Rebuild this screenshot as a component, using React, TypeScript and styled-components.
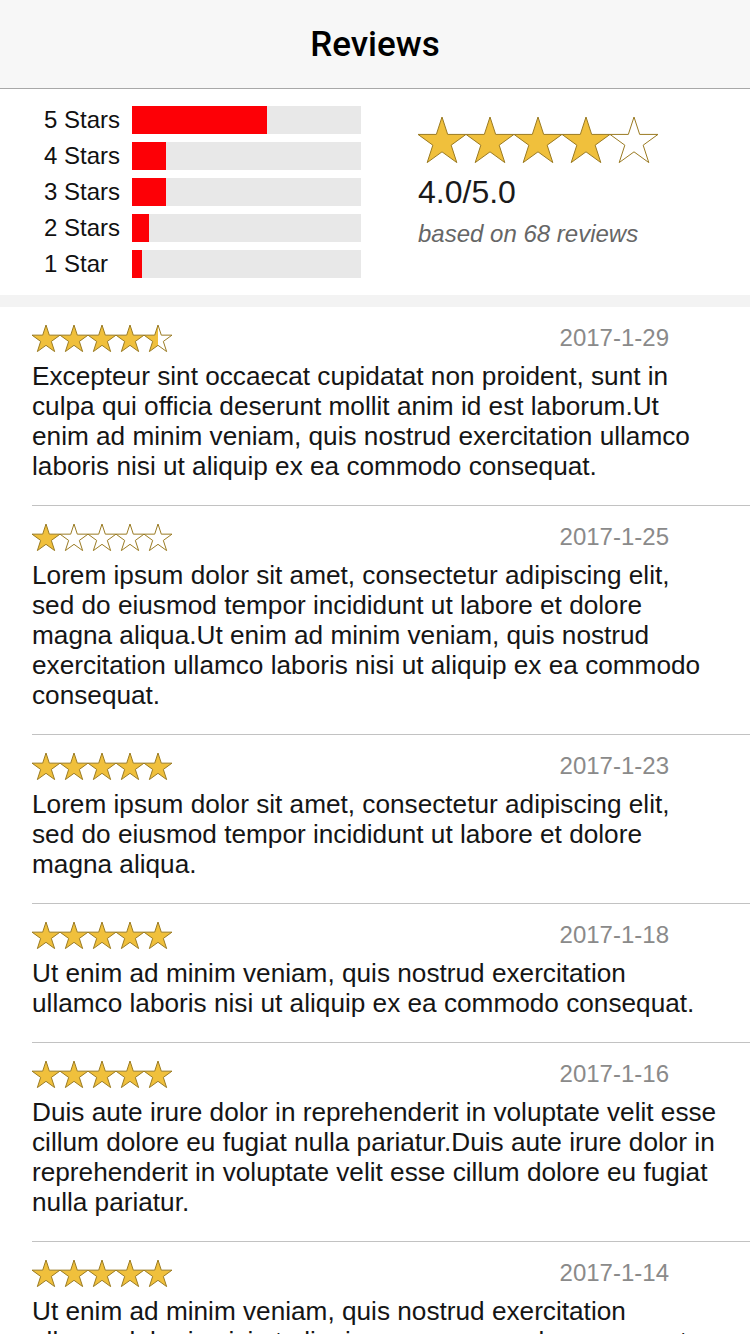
import React, { useId } from "react";
import styled, { createGlobalStyle } from "styled-components";

const GlobalStyle = createGlobalStyle`
  html, body { margin: 0; padding: 0; background: #ffffff; }
  body { font-family: "Liberation Sans", Arial, Helvetica, sans-serif; color: #111; }
  * { box-sizing: border-box; }
`;

const Page = styled.div`
  width: 750px;
  min-height: 1334px;
  background: #fff;
  overflow: hidden;
`;

const NavBar = styled.header`
  height: 89px;
  background: #f7f7f7;
  border-bottom: 1px solid #a8a8a8;
  display: flex;
  align-items: center;
  justify-content: center;
`;

const Title = styled.h1`
  margin: 0;
  font-family: Roboto, "Liberation Sans", Arial, sans-serif;
  font-weight: 500;
  font-size: 35px;
  color: #000;
`;

const Summary = styled.section`
  display: flex;
  padding: 17px 0 17px 44px;
`;

const Bars = styled.div`
  display: flex;
  flex-direction: column;
  gap: 8px;
`;

const BarRow = styled.div`
  display: flex;
  align-items: center;
  height: 28px;
`;

const BarLabel = styled.span`
  width: 88px;
  font-size: 24px;
  line-height: 28px;
  color: #111;
`;

const Track = styled.div`
  width: 229px;
  height: 28px;
  background: #e8e8e8;
  display: flex;
`;

const Fill = styled.div`
  height: 100%;
  background: #fd0006;
`;

const Overall = styled.div`
  margin-left: 57px;
  margin-top: 11px;
  display: flex;
  flex-direction: column;
`;

const Score = styled.div`
  margin-top: 10px;
  font-size: 32px;
  line-height: 38px;
  color: #1a1a1a;
`;

const Based = styled.div`
  margin-top: 8px;
  font-size: 24px;
  line-height: 30px;
  font-style: italic;
  color: #666;
`;

const Gap = styled.div`
  height: 12px;
  background: #f3f3f3;
`;

const List = styled.div`
  display: flex;
  flex-direction: column;
`;

const Item = styled.article<{ $last?: boolean }>`
  padding: 17px 32px 25px 32px;
  position: relative;
  &::after {
    content: "";
    display: ${(p) => (p.$last ? "none" : "block")};
    position: absolute;
    left: 32px;
    right: 0;
    bottom: 0;
    height: 1px;
    background: #c2c2c2;
  }
`;

const ItemHead = styled.div`
  display: flex;
  align-items: center;
  justify-content: space-between;
  height: 28px;
  padding-right: 49px;
  margin-bottom: 9px;
`;

const DateText = styled.span`
  font-size: 24px;
  color: #8a8a8a;
`;

const Body = styled.p`
  margin: 0;
  font-size: 26.2px;
  line-height: 30px;
  color: #151515;
`;

const StarRow = styled.div`
  display: flex;
  line-height: 0;
`;

const STAR_PATH =
  "M24 0 L29.66 17.41 L47.97 17.41 L33.16 28.18 L38.81 45.59 L24 34.83 L9.19 45.59 L14.84 28.18 L0.03 17.41 L18.34 17.41 Z";

function Star({ size, fill }: { size: number; fill: number }) {
  const id = useId().replace(/:/g, "");
  const h = (size * 46) / 48;
  return (
    <svg
      width={size}
      height={h}
      viewBox="0 0 48 46"
      style={{ overflow: "visible", display: "block" }}
    >
      <defs>
        <linearGradient id={`g${id}`} x1="0" y1="0" x2="1" y2="0">
          <stop offset={fill} stopColor="#f0c03c" />
          <stop offset={fill} stopColor="#ffffff" />
        </linearGradient>
      </defs>
      <path
        d={STAR_PATH}
        fill={`url(#g${id})`}
        stroke="#9a7a22"
        strokeWidth={48 / size}
        strokeLinejoin="miter"
      />
    </svg>
  );
}

function Stars({ value, size }: { value: number; size: number }) {
  return (
    <StarRow>
      {[0, 1, 2, 3, 4].map((i) => (
        <Star key={i} size={size} fill={Math.max(0, Math.min(1, value - i))} />
      ))}
    </StarRow>
  );
}

const dist = [
  { label: "5 Stars", count: 40 },
  { label: "4 Stars", count: 10 },
  { label: "3 Stars", count: 10 },
  { label: "2 Stars", count: 5 },
  { label: "1 Star", count: 3 },
];

const reviews = [
  {
    rating: 4.5,
    date: "2017-1-29",
    text: "Excepteur sint occaecat cupidatat non proident, sunt in culpa qui officia deserunt mollit anim id est laborum.Ut enim ad minim veniam, quis nostrud exercitation ullamco laboris nisi ut aliquip ex ea commodo consequat.",
  },
  {
    rating: 1,
    date: "2017-1-25",
    text: "Lorem ipsum dolor sit amet, consectetur adipiscing elit, sed do eiusmod tempor incididunt ut labore et dolore magna aliqua.Ut enim ad minim veniam, quis nostrud exercitation ullamco laboris nisi ut aliquip ex ea commodo consequat.",
  },
  {
    rating: 5,
    date: "2017-1-23",
    text: "Lorem ipsum dolor sit amet, consectetur adipiscing elit, sed do eiusmod tempor incididunt ut labore et dolore magna aliqua.",
  },
  {
    rating: 5,
    date: "2017-1-18",
    text: "Ut enim ad minim veniam, quis nostrud exercitation ullamco laboris nisi ut aliquip ex ea commodo consequat.",
  },
  {
    rating: 5,
    date: "2017-1-16",
    text: "Duis aute irure dolor in reprehenderit in voluptate velit esse cillum dolore eu fugiat nulla pariatur.Duis aute irure dolor in reprehenderit in voluptate velit esse cillum dolore eu fugiat nulla pariatur.",
  },
  {
    rating: 5,
    date: "2017-1-14",
    text: "Ut enim ad minim veniam, quis nostrud exercitation ullamco laboris nisi ut aliquip ex ea commodo consequat.",
  },
];

export default function App() {
  const total = dist.reduce((s, d) => s + d.count, 0);
  return (
    <Page>
      <GlobalStyle />
      <NavBar>
        <Title>Reviews</Title>
      </NavBar>
      <Summary>
        <Bars>
          {dist.map((d) => (
            <BarRow key={d.label}>
              <BarLabel>{d.label}</BarLabel>
              <Track>
                <Fill style={{ width: `${(d.count / total) * 100}%` }} />
              </Track>
            </BarRow>
          ))}
        </Bars>
        <Overall>
          <Stars value={4} size={48} />
          <Score>4.0/5.0</Score>
          <Based>based on 68 reviews</Based>
        </Overall>
      </Summary>
      <Gap />
      <List>
        {reviews.map((r, i) => (
          <Item key={i} $last={i === reviews.length - 1}>
            <ItemHead>
              <Stars value={r.rating} size={28} />
              <DateText>{r.date}</DateText>
            </ItemHead>
            <Body>{r.text}</Body>
          </Item>
        ))}
      </List>
    </Page>
  );
}
